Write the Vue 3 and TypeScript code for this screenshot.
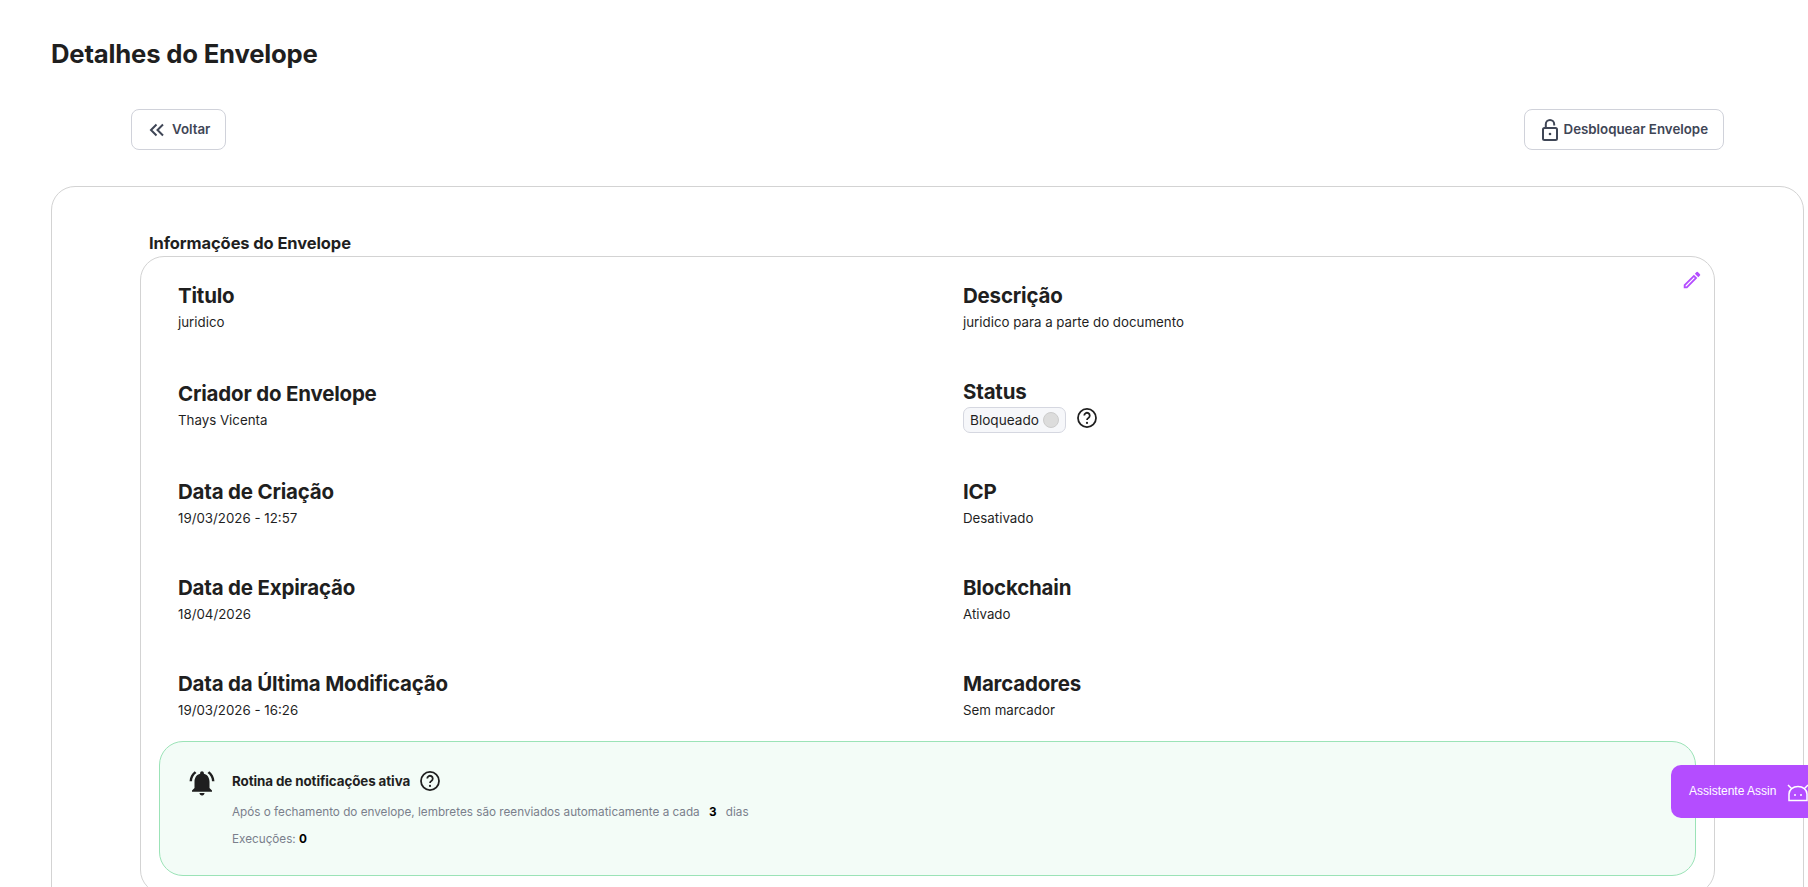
<script setup lang="ts">
interface Item { label: string; value: string }
const left: Item[] = [
  { label: 'Titulo', value: 'juridico' },
  { label: 'Criador do Envelope', value: 'Thays Vicenta' },
  { label: 'Data de Criação', value: '19/03/2026 - 12:57' },
  { label: 'Data de Expiração', value: '18/04/2026' },
  { label: 'Data da Última Modificação', value: '19/03/2026 - 16:26' },
]
const right: Item[] = [
  { label: 'Descrição', value: 'juridico para a parte do documento' },
  { label: 'Status', value: '' },
  { label: 'ICP', value: 'Desativado' },
  { label: 'Blockchain', value: 'Ativado' },
  { label: 'Marcadores', value: 'Sem marcador' },
]
const rows = left.map((l, i) => [l, right[i]])
</script>

<template>
  <div class="page">
    <h1 class="title">Detalhes do Envelope</h1>
    <div class="actions">
      <button class="btn">
        <svg width="18" height="18" viewBox="0 0 18 18" fill="none" stroke="#3f4656" stroke-width="2"><path d="M8.500 3.500 3 9l5.500 5.500M15 3.500 9.500 9l5.500 5.500" /></svg>
        <span>Voltar</span>
      </button>
      <button class="btn lockbtn">
        <svg width="18" height="22" viewBox="0 0 18 22" fill="none" stroke="#3f4656" stroke-width="2"><path d="M4.800 9V5.200a4.200 4.200 0 0 1 8.400 0v1.300" /><rect x="2" y="9" width="14" height="12" rx="1.500" /><circle cx="9" cy="15" r="1.300" fill="#3f4656" stroke="none" /></svg>
        <span>Desbloquear Envelope</span>
      </button>
    </div>
    <div class="outer">
      <h2 class="section">Informações do Envelope</h2>
      <div class="inner">
        <svg class="edit" width="22" height="22" viewBox="0 0 24 24" fill="#b44dff"><path d="M3 17.250V21h3.750L17.810 9.940l-3.750-3.750L3 17.250zM5.920 19H5v-.92l9.060-9.060.92.920L5.920 19zM20.710 7.040a1 1 0 0 0 0-1.410l-2.340-2.340a1 1 0 0 0-1.410 0l-1.830 1.830 3.750 3.750 1.830-1.830z" /></svg>
        <div v-for="(row, i) in rows" :key="i" class="row">
          <div v-for="cell in row" :key="cell.label" class="cell">
            <div class="label" :class="{ raised: cell.label === 'Status' }">{{ cell.label }}</div>
            <div v-if="cell.label === 'Status'" class="status">
              <span class="pill">Bloqueado<i class="dot"></i></span>
              <svg class="help" width="22" height="22" viewBox="0 0 20 20" fill="none" stroke="#1f1f1f" stroke-width="1.600"><circle cx="10" cy="10" r="8.200" /><path d="M7.500 7.800a2.500 2.500 0 1 1 3.800 2.100c-.9.600-1.300 1-1.300 2" /><circle cx="10" cy="14.500" r="1" fill="#1f1f1f" stroke="none" /></svg>
            </div>
            <div v-else class="value">{{ cell.value }}</div>
          </div>
        </div>
        <div class="notice">
          <svg class="bell" width="30" height="30" viewBox="0 0 24 24" fill="#1f1f1f"><path d="M7.580 4.080 6.150 2.650C3.750 4.480 2.170 7.300 2.030 10.500h2a8.445 8.445 0 0 1 3.550-6.420zm12.390 6.420h2c-.15-3.200-1.730-6.020-4.120-7.850l-1.420 1.430a8.495 8.495 0 0 1 3.540 6.420zM18 11c0-3.070-1.640-5.640-4.500-6.320V4c0-.83-.67-1.500-1.500-1.500s-1.500.67-1.500 1.500v.68C7.630 5.360 6 7.920 6 11v5l-2 2v1h16v-1l-2-2v-5zm-6 11c.14 0 .27-.01.4-.04.65-.14 1.180-.58 1.440-1.180.1-.24.15-.5.15-.78h-4c.01 1.100.9 2 2.010 2z" /></svg>
          <div>
            <div class="notice-head">
              <span class="notice-title">Rotina de notificações ativa</span>
              <svg width="22" height="22" viewBox="0 0 20 20" fill="none" stroke="#1f1f1f" stroke-width="1.600"><circle cx="10" cy="10" r="8.200" /><path d="M7.500 7.800a2.500 2.500 0 1 1 3.800 2.100c-.9.600-1.300 1-1.300 2" /><circle cx="10" cy="14.500" r="1" fill="#1f1f1f" stroke="none" /></svg>
            </div>
            <p class="notice-text">Após o fechamento do envelope, lembretes são reenviados automaticamente a cada <b>3</b> dias</p>
            <p class="notice-text">Execuções: <b class="zero">0</b></p>
          </div>
        </div>
      </div>
    </div>
    <div class="assistant">
      <span>Assistente Assin</span>
      <svg width="24" height="22" viewBox="0 0 24 22" fill="none" stroke="#fff" stroke-width="1.500"><path d="M3 19.500v-6.500a9 7.500 0 0 1 18 0v6.500zM2 4l3.500 3.500M22 4l-3.500 3.500" /><circle cx="9" cy="14" r="1" fill="#fff" stroke="none" /><circle cx="15" cy="14" r="1" fill="#fff" stroke="none" /></svg>
    </div>
  </div>
</template>

<style>
html, body { margin: 0; background: #fff; overflow: hidden; }
</style>

<style scoped>
.page {
  height: 887px;
  overflow: hidden;
  box-sizing: border-box;
  padding: 38px 4px 0 51px;
  font-family: Inter, "Liberation Sans", sans-serif;
  color: #1f1f1f;
}
.title { margin: 0; font-size: 25.700px; line-height: 32px; font-weight: 700; letter-spacing: -.2px; }
.actions {
  display: flex;
  justify-content: space-between;
  margin: 39px 80px 36px 80px;
}
.btn {
  display: flex;
  align-items: center;
  gap: 6px;
  height: 41px;
  padding: 0 15px 0 16px;
  background: #fff;
  border: 1px solid #d0d2da;
  border-radius: 8px;
  font: 600 13.300px Inter, sans-serif;
  color: #3f4656;
}
.btn span { padding-bottom: 2px; }
.lockbtn { gap: 5px; padding-left: 16px; }
.outer {
  border: 1px solid #d3d3d3;
  border-radius: 24px;
  padding: 45px 88px 0 88px;
  height: 800px;
  box-sizing: border-box;
}
.section { margin: 0 0 2px 9px; font-size: 16.500px; line-height: 22px; font-weight: 700; letter-spacing: -.1px; }
.inner {
  position: relative;
  box-sizing: border-box;
  border: 1px solid #d3d3d3;
  border-radius: 24px;
  padding: 25px 18px 0;
  height: 638px;
}
.edit { position: absolute; top: 12px; right: 11px; }
.row {
  display: grid;
  grid-template-columns: 785px 1fr;
  padding-left: 19px;
}
.row:nth-of-type(1), .row:nth-of-type(2) { height: 98px; }
.row:nth-of-type(3), .row:nth-of-type(4) { height: 96px; }
.row:nth-of-type(5) { height: 71px; }
.label { font-size: 20.500px; line-height: 28px; font-weight: 700; letter-spacing: -.2px; }
.label.raised { margin: -2px 0 2px; }
.value { font-size: 13.300px; line-height: 24px; }
.status { display: flex; align-items: center; gap: 10px; margin-top: -1px; }
.help { position: relative; top: -2px; }
.pill {
  display: inline-flex;
  align-items: center;
  gap: 4px;
  height: 26px;
  box-sizing: border-box;
  padding: 0 6px 0 6px;
  background: #f6f7fa;
  border: 1px solid #d5d7e0;
  border-radius: 7px;
  font-size: 13.600px;
}
.dot { width: 16px; height: 16px; border-radius: 50%; background: #dcdcdc; border: 1px solid #ccc; box-sizing: border-box; }
.notice {
  display: flex;
  gap: 15px;
  box-sizing: border-box;
  height: 135px;
  padding: 27px 27px;
  background: #f3fcf7;
  border: 1px solid #9be3b7;
  border-radius: 24px;
}
.bell { margin-top: -1px; }
.notice-head { display: flex; align-items: center; gap: 9px; height: 24px; }
.notice-title { font-size: 13.400px; font-weight: 700; letter-spacing: -.1px; }
.notice-text { margin: 11px 0 0; font-size: 11.730px; line-height: 16px; color: #7a7f8c; }
.notice-text b { color: #000; margin: 0 6px; font-weight: 700; }
.notice-text b.zero { margin: 0; }
.assistant {
  position: fixed;
  left: 1671px;
  top: 765px;
  width: 160px;
  height: 53px;
  display: flex;
  align-items: center;
  gap: 10px;
  box-sizing: border-box;
  padding-left: 18px;
  background: #b44dff;
  border-radius: 10px;
  color: #fff;
  font: 12px "Liberation Sans", sans-serif;
}
.assistant span { padding-bottom: 2px; }
</style>
